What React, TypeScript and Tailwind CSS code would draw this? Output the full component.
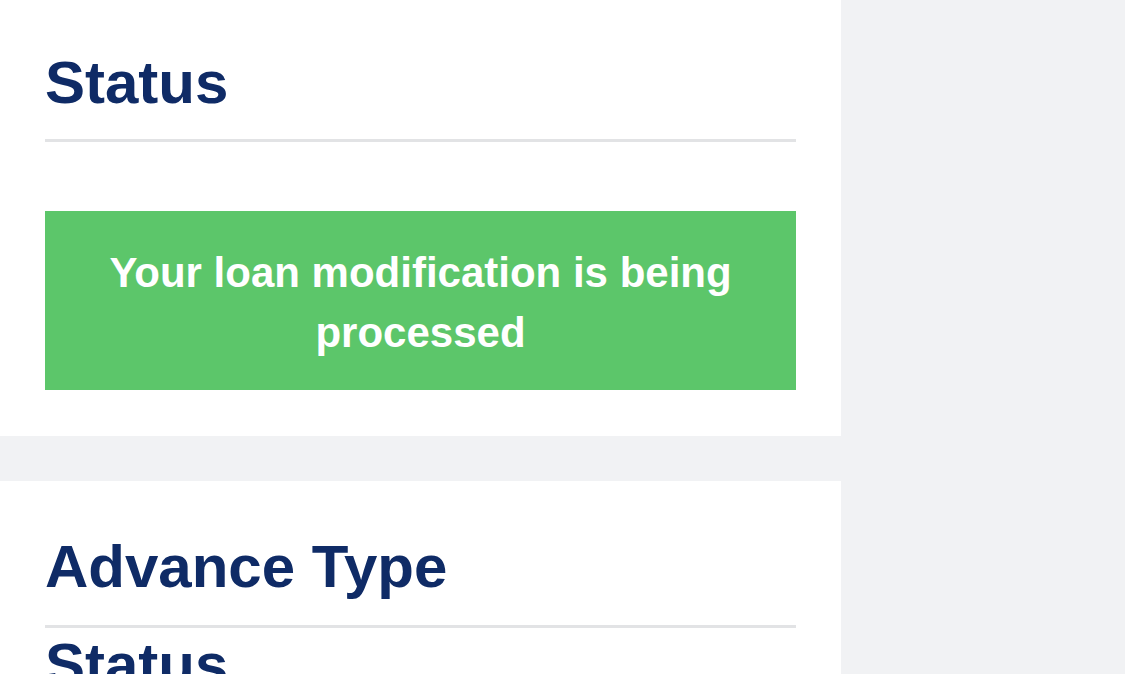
export default function App() {
  const font = { fontFamily: '"Liberation Sans", Arial, sans-serif' };
  return (
    <div className="h-[674px] w-[1125px] bg-[#f1f2f4] overflow-hidden" style={font}>
      <div className="w-[841px] flex flex-col">
        <section className="bg-white px-[45px] pt-[48px] pb-[46px]">
          <h2 className="text-[60px] leading-[70px] font-bold text-[#0f2b66]">Status</h2>
          <div className="mt-[21px] h-[3px] bg-[#e2e3e5]" />
          <div className="mt-[69px] bg-[#5cc66a] pt-[32px] pb-[27px] px-[40px] text-center text-white font-bold text-[42px] leading-[60px]">
            Your loan modification is being processed
          </div>
        </section>
        <section className="mt-[45px] bg-white px-[45px] pt-[51px] h-[300px]">
          <h2 className="text-[60px] leading-[70px] font-bold text-[#0f2b66]">Advance Type</h2>
          <div className="mt-[23px] h-[3px] bg-[#e2e3e5]" />
          <h2 className="mt-[2px] text-[60px] leading-[70px] font-bold text-[#0f2b66]">Status</h2>
        </section>
      </div>
    </div>
  );
}
